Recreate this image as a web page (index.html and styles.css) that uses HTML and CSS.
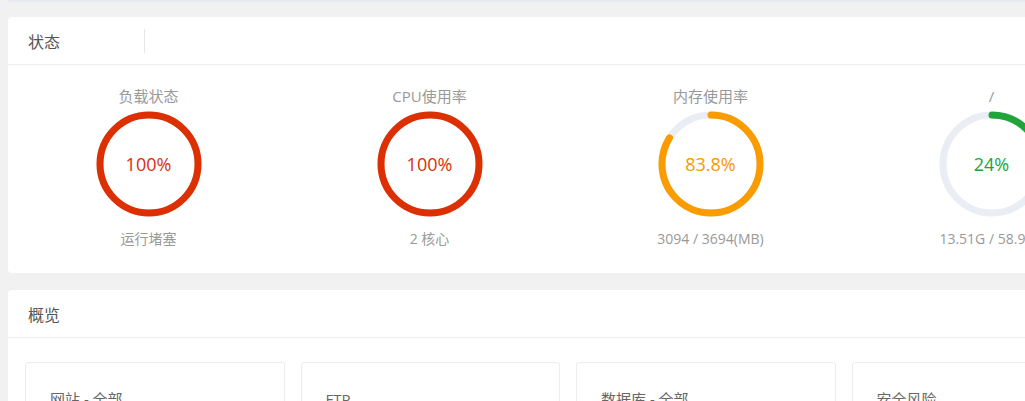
FILE: index.html
```html
<!DOCTYPE html>
<html lang="zh">
<head>
<meta charset="utf-8">
<title>状态</title>
<link rel="stylesheet" href="styles.css">
</head>
<body>
<div class="page">
  <div class="prev-card"></div>

  <section class="card status-card">
    <header class="card-head">
      <div class="card-title with-sep">状态</div>
    </header>
    <div class="gauges">
      <div class="gauge">
        <div class="gauge-title">负载状态</div>
        <div class="ring">
          <svg viewBox="0 0 106 106" width="106" height="106">
            <circle cx="53" cy="53" r="49" class="track"/>
            <circle cx="53" cy="53" r="49" class="bar red"/>
          </svg>
          <span class="ring-val red-text">100%</span>
        </div>
        <div class="gauge-sub">运行堵塞</div>
      </div>
      <div class="gauge">
        <div class="gauge-title">CPU使用率</div>
        <div class="ring">
          <svg viewBox="0 0 106 106" width="106" height="106">
            <circle cx="53" cy="53" r="49" class="track"/>
            <circle cx="53" cy="53" r="49" class="bar red"/>
          </svg>
          <span class="ring-val red-text">100%</span>
        </div>
        <div class="gauge-sub">2 核心</div>
      </div>
      <div class="gauge">
        <div class="gauge-title">内存使用率</div>
        <div class="ring">
          <svg viewBox="0 0 106 106" width="106" height="106">
            <circle cx="53" cy="53" r="49" class="track"/>
            <circle cx="53" cy="53" r="49" class="bar orange round" stroke-dasharray="258 400"/>
          </svg>
          <span class="ring-val orange-text">83.8%</span>
        </div>
        <div class="gauge-sub">3094 / 3694(MB)</div>
      </div>
      <div class="gauge">
        <div class="gauge-title">/</div>
        <div class="ring">
          <svg viewBox="0 0 106 106" width="106" height="106">
            <circle cx="53" cy="53" r="49" class="track"/>
            <circle cx="53" cy="53" r="49" class="bar green round" stroke-dasharray="74 400"/>
          </svg>
          <span class="ring-val green-text">24%</span>
        </div>
        <div class="gauge-sub">13.51G / 58.92G</div>
      </div>
    </div>
  </section>

  <section class="card overview-card">
    <header class="card-head">
      <div class="card-title">概览</div>
    </header>
    <div class="tiles">
      <div class="tile"><div class="tile-title">网站 - 全部</div></div>
      <div class="tile"><div class="tile-title">FTP</div></div>
      <div class="tile"><div class="tile-title">数据库 - 全部</div></div>
      <div class="tile"><div class="tile-title">安全风险</div></div>
    </div>
  </section>
</div>
</body>
</html>
```

FILE: styles.css
```css
html, body {
  margin: 0;
  padding: 0;
  overflow: hidden;
}
body {
  background: #f1f1f1;
  font-family: "Open Sans", "Noto Sans CJK SC", sans-serif;
  color: #666;
}
.page {
  width: 1300px;
  padding-left: 8px;
}
.prev-card {
  height: 2px;
  background: #e6e9ef;
  border-radius: 0 0 4px 4px;
}
.card {
  background: #fff;
  border-radius: 4px;
}
.status-card {
  margin-top: 15px;
}
.overview-card {
  margin-top: 17px;
}
.card-head {
  height: 47px;
  border-bottom: 1px solid #eceef0;
  display: flex;
  align-items: center;
}
.card-title {
  padding: 0 20px;
  font-size: 16px;
  line-height: 24px;
  color: #555;
  font-family: "Noto Sans CJK SC", sans-serif;
}
.with-sep {
  width: 96px;
  border-right: 1px solid #e6e6e6;
}
.gauges {
  display: flex;
  padding: 21px 0 24px;
}
.gauge {
  width: 281px;
  display: flex;
  flex-direction: column;
  align-items: center;
}
.gauge-title, .gauge-sub {
  line-height: 20px;
  color: #999;
}
.gauge-title {
  font-size: 15px;
  margin-bottom: 5px;
}
.gauge-sub {
  font-size: 14px;
  margin-top: 12px;
}
.ring {
  position: relative;
  width: 106px;
  height: 106px;
}
.ring svg {
  display: block;
  transform: rotate(-90deg);
}
.track {
  fill: none;
  stroke: #eaedf4;
  stroke-width: 7;
}
.bar {
  fill: none;
  stroke-width: 7;
}
.bar.round {
  stroke-linecap: round;
}
.red { stroke: #dc2f02; }
.orange { stroke: #fa9c00; }
.green { stroke: #20a53a; }
.ring-val {
  position: absolute;
  inset: 0;
  display: flex;
  align-items: center;
  justify-content: center;
  font-size: 18px;
}
.red-text { color: #d8300a; }
.orange-text { color: #f79a00; }
.green-text { color: #20a53a; }
.tiles {
  display: grid;
  grid-template-columns: repeat(4, 259.5px);
  column-gap: 16px;
  padding: 24px 17px;
}
.tile {
  border: 1px solid #ececec;
  border-radius: 3px;
  height: 160px;
  padding: 25px 24px;
}
.tile-title {
  font-size: 15px;
  line-height: 22px;
  color: #666;
}
```
